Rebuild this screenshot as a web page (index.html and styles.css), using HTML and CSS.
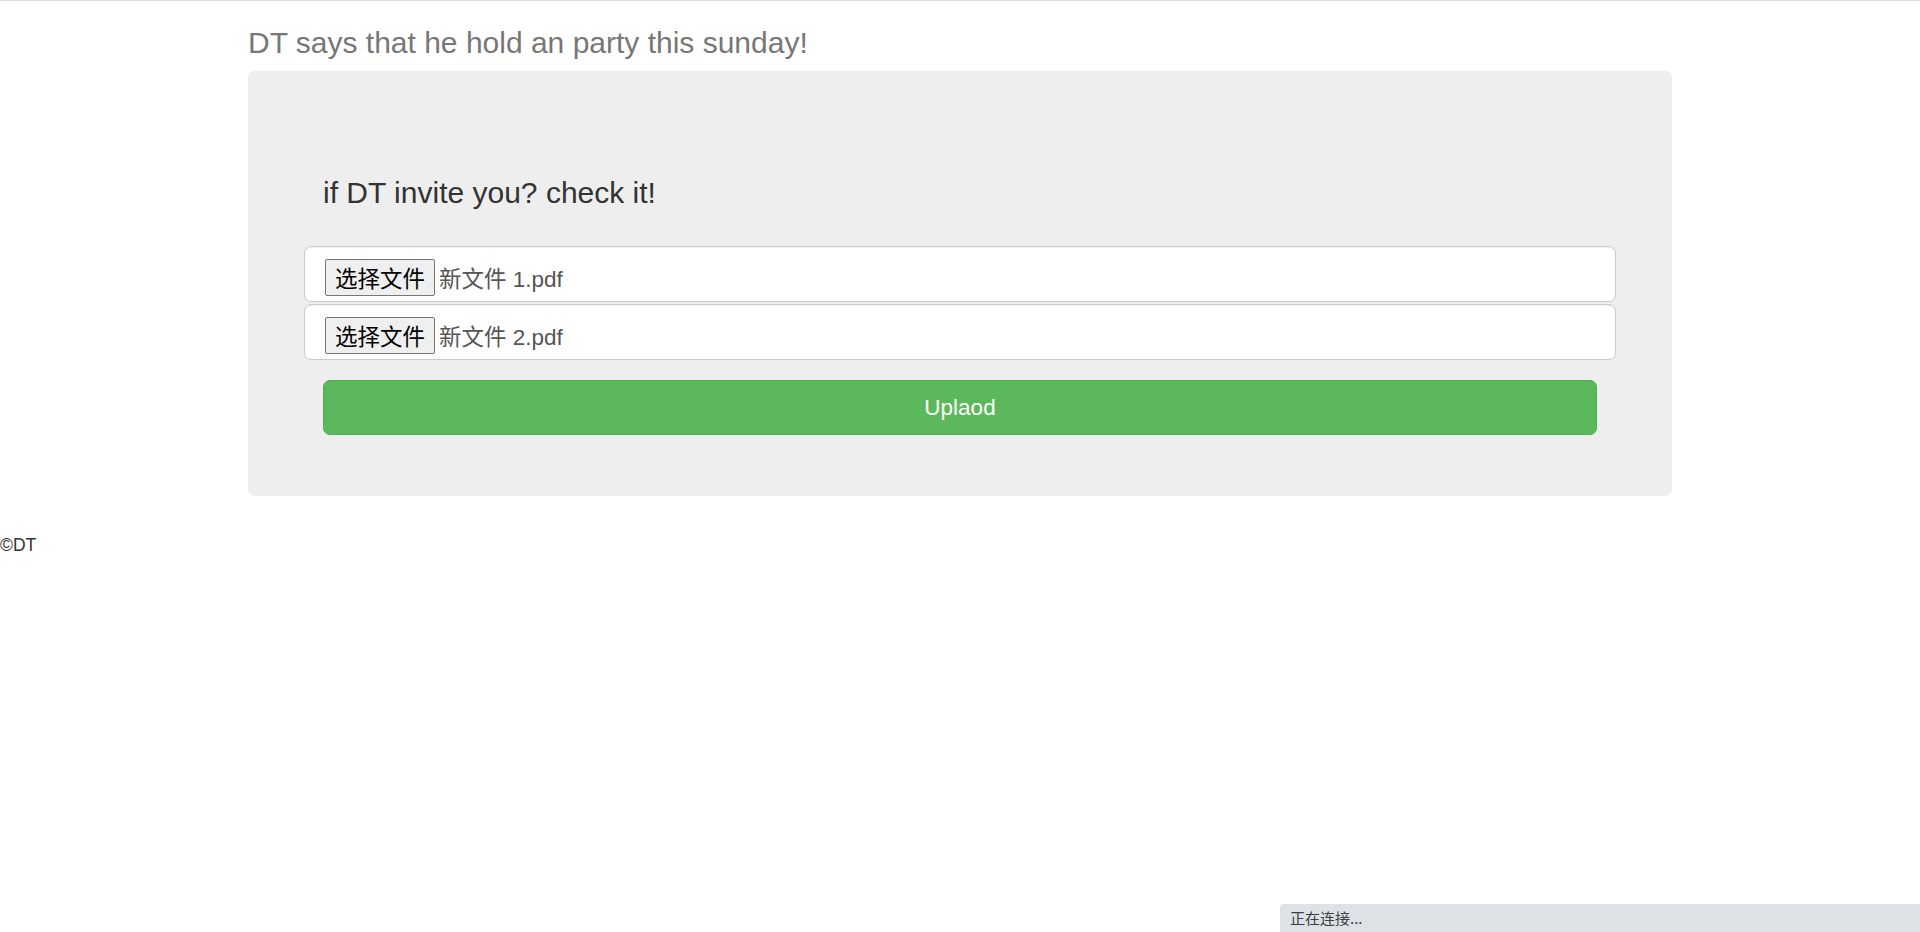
FILE: index.html
```html
<!DOCTYPE html>
<html lang="zh-CN">
<head>
<meta charset="utf-8">
<title>DT party</title>
<link rel="stylesheet" href="styles.css">
</head>
<body>
<div class="topline"></div>
<div class="container">
  <div class="header">
    <h3 class="title">DT says that he hold an party this sunday!</h3>
  </div>
  <div class="jumbotron">
    <h3 class="lead-title">if DT invite you? check it!</h3>
    <form class="upload-form">
      <div class="file-list">
        <div class="file-input"><button type="button" class="file-btn">选择文件</button><span class="file-name">新文件 1.pdf</span></div>
        <div class="file-input"><button type="button" class="file-btn">选择文件</button><span class="file-name">新文件 2.pdf</span></div>
      </div>
      <button type="button" class="btn-upload">Uplaod</button>
    </form>
  </div>
</div>
<footer class="footer">©DT</footer>
<div class="status-bubble">正在连接...</div>
</body>
</html>
```

FILE: styles.css
```css
html, body {
  margin: 0;
  padding: 0;
  background: #fff;
}
body {
  font-family: "Liberation Sans", "Noto Sans CJK SC", sans-serif;
  font-size: 17.5px;
  line-height: 1.42857;
  color: #333;
}
.topline {
  height: 1px;
  background: #dedede;
}
.container {
  width: 1424px;
  margin: 0 auto;
}
.title {
  margin: 25px 0 12px;
  font-size: 30px;
  line-height: 33px;
  font-weight: normal;
  color: #777;
}
.jumbotron {
  background: #eee;
  border-radius: 7px;
  padding: 60px 75px 61px;
}
.lead-title {
  margin: 45px 0 37px;
  font-size: 30px;
  line-height: 33px;
  font-weight: normal;
  color: #333;
}
.upload-form {
  display: flex;
  flex-direction: column;
}
.file-list {
  display: flex;
  flex-direction: column;
  gap: 2px;
  margin: 0 -19px;
}
.file-input {
  box-sizing: border-box;
  height: 56px;
  display: flex;
  align-items: flex-start;
  padding: 12px 20px 5px;
  background: #fff;
  border: 1px solid #ccc;
  border-radius: 7px;
  box-shadow: inset 0 1px 1px rgba(0, 0, 0, 0.075);
}
.file-btn {
  box-sizing: border-box;
  height: 37px;
  margin: 0;
  padding: 0 9px;
  font-family: "Noto Sans CJK SC", "Liberation Sans", sans-serif;
  font-size: 22.5px;
  line-height: 35px;
  color: #000;
  background: #efefef;
  border: 1px solid #767676;
  border-radius: 2px;
}
.file-name {
  margin-left: 4px;
  padding-top: 2px;
  font-family: "Liberation Sans", "Noto Sans CJK SC", sans-serif;
  font-size: 22.5px;
  line-height: 37px;
  color: #555;
}
.btn-upload {
  box-sizing: border-box;
  margin-top: 20px;
  height: 55px;
  width: 100%;
  font-family: "Liberation Sans", sans-serif;
  font-size: 22.5px;
  color: #fff;
  background: #5cb85c;
  border: 1px solid #4cae4c;
  border-radius: 7px;
}
.footer {
  margin-top: 37px;
  font-size: 17.5px;
  line-height: 25px;
  color: #333;
}
.status-bubble {
  position: fixed;
  right: 0;
  bottom: 0;
  box-sizing: border-box;
  width: 640px;
  height: 28px;
  padding: 0 10px;
  background: #dee1e6;
  border-top-left-radius: 4px;
  font-family: "Noto Sans CJK SC", sans-serif;
  font-size: 15px;
  line-height: 28px;
  color: #3c4043;
}
```
